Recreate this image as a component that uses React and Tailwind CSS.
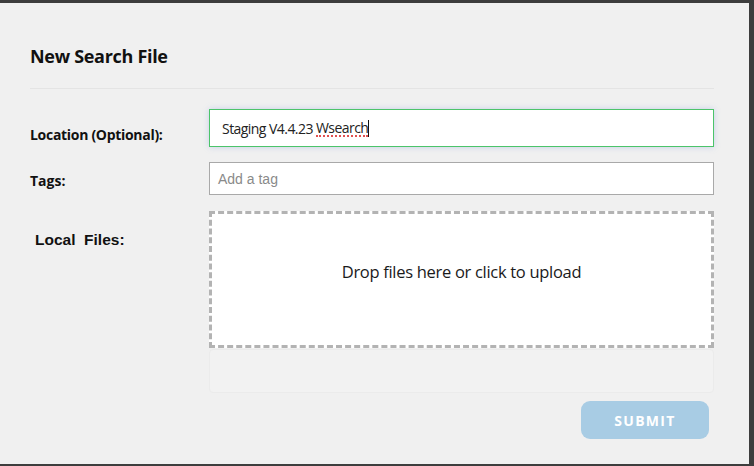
import React from 'react';

function FieldRow({ label, labelClass, children, alignTop }) {
    return (
        <div className={`flex ${alignTop ? 'items-start' : 'items-center'}`}>
            <div className={`w-[179px] shrink-0 ${labelClass}`}>{label}</div>
            <div className="flex-1">{children}</div>
        </div>
    );
}

export default function App() {
    return (
        <div className="w-[754px] h-[466px] bg-[#3d3d3d] pt-[3px] pb-[2px] overflow-hidden">
            <div className="w-[749px] h-[461px] bg-[#f0f0f0] pl-[30px] pr-[35px] pt-[41px] flex flex-col">
                <h2 className="text-[18px] leading-6 font-bold text-[#111] font-['Open_Sans',sans-serif] tracking-[-0.3px]">
                    New Search File
                </h2>
                <div className="mt-5 border-b border-[#e4e4e4]" />

                <div className="mt-5 flex flex-col">
                    <FieldRow
                        label="Location (Optional):"
                        labelClass="pt-[12px] text-[14px] font-bold text-[#111] font-['Open_Sans',sans-serif] tracking-[-0.3px]"
                    >
                        <div className="h-[38px] bg-white border border-[#4cc46a] shadow-[0_0_6px_rgba(120,150,220,0.35)] flex items-center pl-3 text-[14px] text-[#222] font-['Open_Sans',sans-serif] tracking-[-0.55px]">
                            <span>Staging V4.4.23&nbsp;</span>
                            <span className="leading-[15px] border-b-2 border-dotted border-[#e05050]">Wsearch</span>
                            <span className="w-px h-[17px] bg-[#111]" />
                        </div>
                    </FieldRow>

                    <div className="mt-[15px]">
                        <FieldRow
                            label="Tags:"
                            labelClass="pt-[3px] text-[14px] font-bold text-[#111] font-['Open_Sans',sans-serif]"
                        >
                            <div className="h-[33px] bg-white border border-[#a9a9a9] flex items-center pl-2 pt-[2px] text-[14px] text-[#8a8a8a] font-['Liberation_Sans',sans-serif]">
                                Add a tag
                            </div>
                        </FieldRow>
                    </div>

                    <div className="mt-4">
                        <FieldRow
                            alignTop
                            label="Local  Files:"
                            labelClass="pl-[5px] pt-[17px] text-[15.5px] font-bold text-[#111] font-['Liberation_Sans',sans-serif] whitespace-pre"
                        >
                            <div className="h-[137px] bg-white border-[3px] border-dashed border-[#b3b3b3] flex items-center justify-center pb-[14px] text-[16.5px] text-[#1a1a1a] font-['Open_Sans',sans-serif] tracking-[-0.3px]">
                                Drop files here or click to upload
                            </div>
                            <div className="mt-px h-[44px] bg-[#f2f2f2] border border-[#ebebeb] rounded-sm" />
                            <div className="mt-2 flex justify-end pr-[5px]">
                                <button className="w-[128px] h-[38px] rounded-[9px] bg-[#a8cce4] text-white text-[14px] font-bold tracking-[1.3px] font-['Open_Sans',sans-serif]">
                                    SUBMIT
                                </button>
                            </div>
                        </FieldRow>
                    </div>
                </div>
            </div>
        </div>
    );
}
